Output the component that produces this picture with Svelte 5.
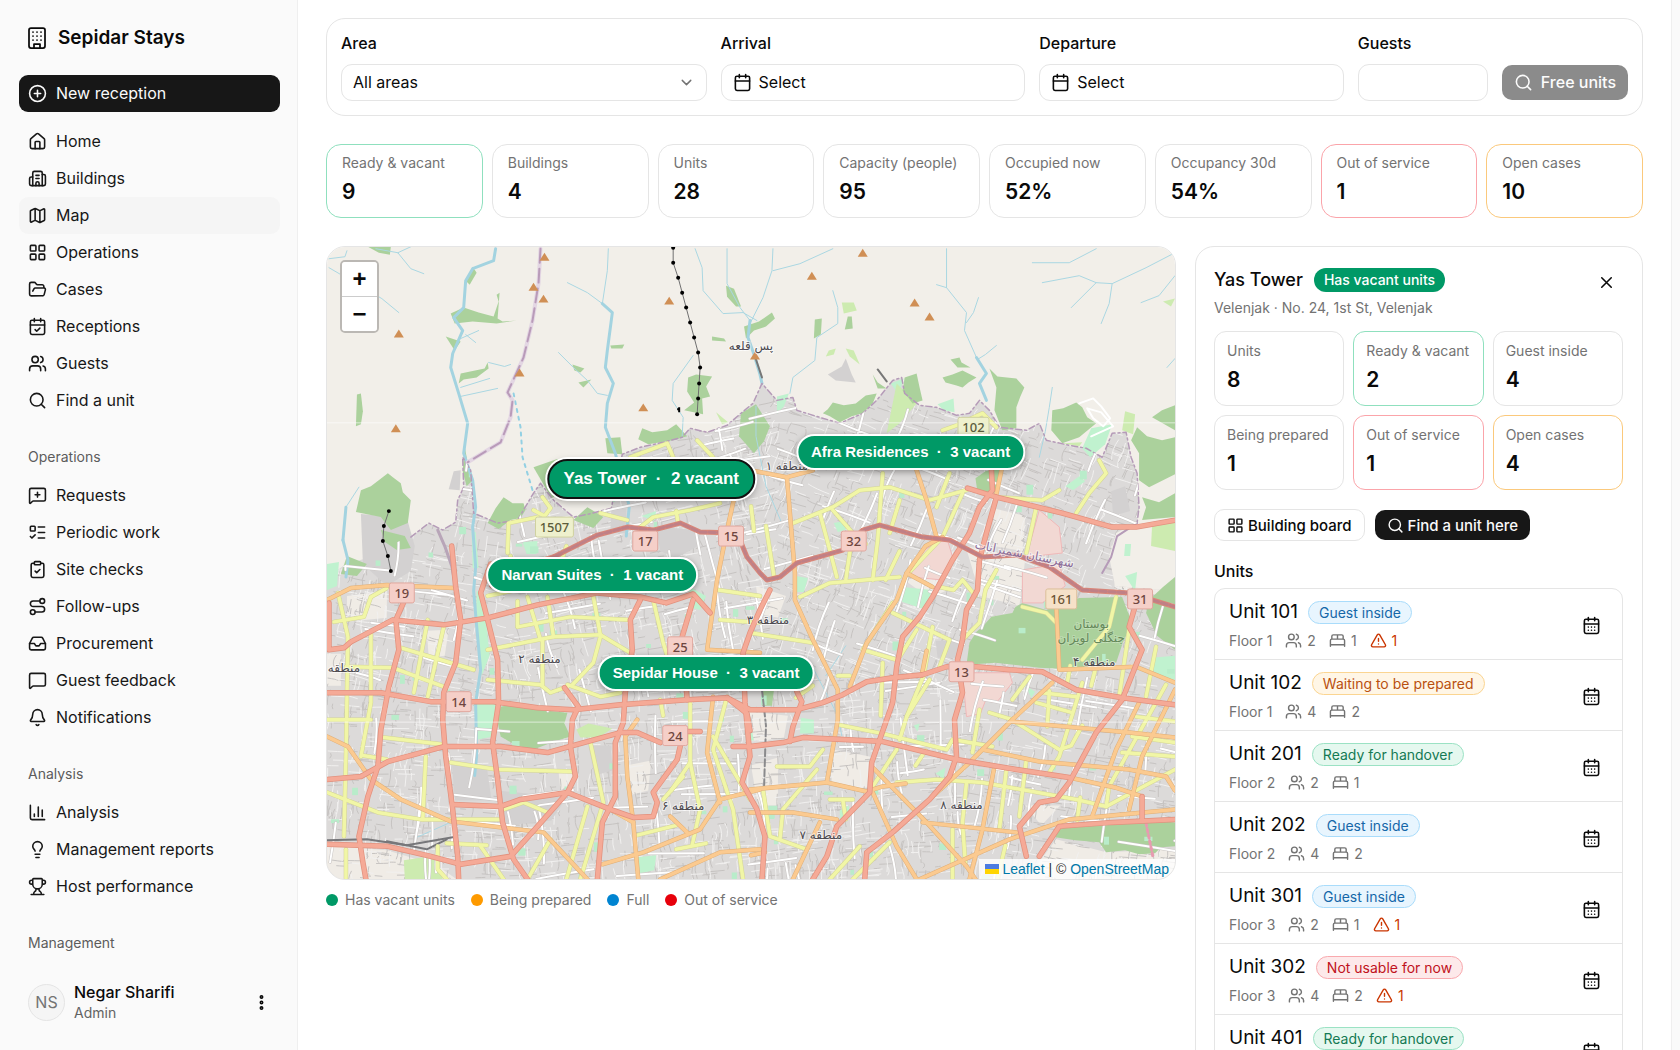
<script lang="ts">
  const icons: Record<string, string> = {
    building: '<rect x="4" y="2" width="16" height="20" rx="2"/><path d="M9 22v-4h6v4M8 6h.01M12 6h.01M16 6h.01M8 10h.01M12 10h.01M16 10h.01M8 14h.01M12 14h.01M16 14h.01"/>',
    plus: '<circle cx="12" cy="12" r="10"/><path d="M8 12h8M12 8v8"/>',
    home: '<path d="M15 21v-8a1 1 0 0 0-1-1h-4a1 1 0 0 0-1 1v8"/><path d="M3 10a2 2 0 0 1 .709-1.528l7-5.999a2 2 0 0 1 2.582 0l7 5.999A2 2 0 0 1 21 10v9a2 2 0 0 1-2 2H5a2 2 0 0 1-2-2z"/>',
    buildings: '<path d="M10 12h4M10 8h4M14 21v-3a2 2 0 0 0-4 0v3"/><path d="M6 10H4a2 2 0 0 0-2 2v7a2 2 0 0 0 2 2h16a2 2 0 0 0 2-2V9a2 2 0 0 0-2-2h-2"/><path d="M6 21V5a2 2 0 0 1 2-2h8a2 2 0 0 1 2 2v16"/>',
    map: '<path d="M14.106 5.553a2 2 0 0 0 1.788 0l3.659-1.83A1 1 0 0 1 21 4.619v12.764a1 1 0 0 1-.553.894l-4.553 2.277a2 2 0 0 1-1.788 0l-4.212-2.106a2 2 0 0 0-1.788 0l-3.659 1.83A1 1 0 0 1 3 19.381V6.618a1 1 0 0 1 .553-.894l4.553-2.277a2 2 0 0 1 1.788 0zM15 5.764v15M9 3.236v15"/>',
    grid: '<rect x="3" y="3" width="7" height="7" rx="1"/><rect x="14" y="3" width="7" height="7" rx="1"/><rect x="14" y="14" width="7" height="7" rx="1"/><rect x="3" y="14" width="7" height="7" rx="1"/>',
    folder: '<path d="m6 14 1.5-2.9A2 2 0 0 1 9.24 10H20a2 2 0 0 1 1.94 2.5l-1.54 6a2 2 0 0 1-1.95 1.5H4a2 2 0 0 1-2-2V5a2 2 0 0 1 2-2h3.9a2 2 0 0 1 1.69.9l.81 1.2a2 2 0 0 0 1.67.9H18a2 2 0 0 1 2 2v2"/>',
    calendarCheck: '<rect x="3" y="4" width="18" height="18" rx="2"/><path d="M8 2v4M16 2v4M3 10h18M9 16l2 2 4-4"/>',
    users: '<path d="M16 21v-2a4 4 0 0 0-4-4H6a4 4 0 0 0-4 4v2M16 3.128a4 4 0 0 1 0 7.744M22 21v-2a4 4 0 0 0-3-3.87"/><circle cx="9" cy="7" r="4"/>',
    search: '<path d="m21 21-4.34-4.34"/><circle cx="11" cy="11" r="8"/>',
    messagePlus: '<path d="M22 17a2 2 0 0 1-2 2H6.828a2 2 0 0 0-1.414.586l-2.202 2.202A.71.71 0 0 1 2 21.286V5a2 2 0 0 1 2-2h16a2 2 0 0 1 2 2zM12 8v6M9 11h6"/>',
    todo: '<path d="M13 5h8M13 12h8M13 19h8M3 17l2 2 4-4"/><rect x="3" y="4" width="6" height="6" rx="1"/>',
    clipboard: '<rect x="8" y="2" width="8" height="4" rx="1"/><path d="M16 4h2a2 2 0 0 1 2 2v14a2 2 0 0 1-2 2H6a2 2 0 0 1-2-2V6a2 2 0 0 1 2-2h2M9 14l2 2 4-4"/>',
    route: '<circle cx="6" cy="19" r="3"/><path d="M9 19h8.5a3.5 3.5 0 0 0 0-7h-11a3.5 3.5 0 0 1 0-7H15"/><circle cx="18" cy="5" r="3"/>',
    inbox: '<path d="M22 12h-6l-2 3h-4l-2-3H2"/><path d="M5.45 5.11 2 12v6a2 2 0 0 0 2 2h16a2 2 0 0 0 2-2v-6l-3.45-6.89A2 2 0 0 0 16.76 4H7.24a2 2 0 0 0-1.79 1.11z"/>',
    message: '<path d="M22 17a2 2 0 0 1-2 2H6.828a2 2 0 0 0-1.414.586l-2.202 2.202A.71.71 0 0 1 2 21.286V5a2 2 0 0 1 2-2h16a2 2 0 0 1 2 2z"/>',
    bell: '<path d="M10.268 21a2 2 0 0 0 3.464 0"/><path d="M3.262 15.326A1 1 0 0 0 4 17h16a1 1 0 0 0 .74-1.673C19.41 13.956 18 12.499 18 8A6 6 0 0 0 6 8c0 4.499-1.411 5.956-2.738 7.326"/>',
    chart: '<path d="M3 3v16a2 2 0 0 0 2 2h16M18 17V9M13 17V5M8 17v-3"/>',
    bulb: '<path d="M15 14c.2-1 .7-1.7 1.5-2.5 1-.9 1.5-2.2 1.5-3.5A6 6 0 0 0 6 8c0 1 .2 2.2 1.5 3.5.7.7 1.3 1.5 1.5 2.5M9 18h6M10 22h4"/>',
    trophy: '<path d="M10 14.66v1.626a2 2 0 0 1-.976 1.696A5 5 0 0 0 7 21.978M14 14.66v1.626a2 2 0 0 0 .976 1.696A5 5 0 0 1 17 21.978M18 9h1.5a1 1 0 0 0 0-5H18M4 22h16M6 9a6 6 0 0 0 12 0V3a1 1 0 0 0-1-1H7a1 1 0 0 0-1 1zM6 9H4.5a1 1 0 0 1 0-5H6"/>',
    dots: '<circle cx="12" cy="5" r="1"/><circle cx="12" cy="12" r="1"/><circle cx="12" cy="19" r="1"/>',
    chevron: '<path d="m6 9 6 6 6-6"/>',
    calendar: '<rect x="3" y="4" width="18" height="18" rx="2"/><path d="M8 2v4M16 2v4M3 10h18"/>',
    calendarDays: '<rect x="3" y="4" width="18" height="18" rx="2"/><path d="M8 2v4M16 2v4M3 10h18M8 14h.01M12 14h.01M16 14h.01M8 18h.01M12 18h.01M16 18h.01"/>',
    bed: '<path d="M2 20v-8a2 2 0 0 1 2-2h16a2 2 0 0 1 2 2v8M4 10V6a2 2 0 0 1 2-2h12a2 2 0 0 1 2 2v4M12 4v6M2 18h20"/>',
    alert: '<path d="m21.73 18-8-14a2 2 0 0 0-3.48 0l-8 14A2 2 0 0 0 4 21h16a2 2 0 0 0 1.73-3M12 9v4M12 17h.01"/>',
    x: '<path d="M18 6 6 18M6 6l12 12"/>'
  };

  const groups = [
    {
      title: '',
      items: [
        { icon: 'home', name: 'Home' },
        { icon: 'buildings', name: 'Buildings' },
        { icon: 'map', name: 'Map' },
        { icon: 'grid', name: 'Operations' },
        { icon: 'folder', name: 'Cases' },
        { icon: 'calendarCheck', name: 'Receptions' },
        { icon: 'users', name: 'Guests' },
        { icon: 'search', name: 'Find a unit' }
      ]
    },
    {
      title: 'Operations',
      items: [
        { icon: 'messagePlus', name: 'Requests' },
        { icon: 'todo', name: 'Periodic work' },
        { icon: 'clipboard', name: 'Site checks' },
        { icon: 'route', name: 'Follow-ups' },
        { icon: 'inbox', name: 'Procurement' },
        { icon: 'message', name: 'Guest feedback' },
        { icon: 'bell', name: 'Notifications' }
      ]
    },
    {
      title: 'Analysis',
      items: [
        { icon: 'chart', name: 'Analysis' },
        { icon: 'bulb', name: 'Management reports' },
        { icon: 'trophy', name: 'Host performance' }
      ]
    },
    { title: 'Management', items: [] }
  ];

  const stats = [
    { label: 'Ready & vacant', value: '9', tone: 'green' },
    { label: 'Buildings', value: '4', tone: '' },
    { label: 'Units', value: '28', tone: '' },
    { label: 'Capacity (people)', value: '95', tone: '' },
    { label: 'Occupied now', value: '52%', tone: '' },
    { label: 'Occupancy 30d', value: '54%', tone: '' },
    { label: 'Out of service', value: '1', tone: 'red' },
    { label: 'Open cases', value: '10', tone: 'amber' }
  ];

  const buildingStats = [
    { label: 'Units', value: '8', tone: '' },
    { label: 'Ready & vacant', value: '2', tone: 'green' },
    { label: 'Guest inside', value: '4', tone: '' },
    { label: 'Being prepared', value: '1', tone: '' },
    { label: 'Out of service', value: '1', tone: 'red' },
    { label: 'Open cases', value: '4', tone: 'amber' }
  ];

  const units = [
    { no: 101, floor: 1, people: 2, beds: 1, alerts: 1, status: 'Guest inside', tone: 'blue' },
    { no: 102, floor: 1, people: 4, beds: 2, alerts: 0, status: 'Waiting to be prepared', tone: 'amber' },
    { no: 201, floor: 2, people: 2, beds: 1, alerts: 0, status: 'Ready for handover', tone: 'green' },
    { no: 202, floor: 2, people: 4, beds: 2, alerts: 0, status: 'Guest inside', tone: 'blue' },
    { no: 301, floor: 3, people: 2, beds: 1, alerts: 1, status: 'Guest inside', tone: 'blue' },
    { no: 302, floor: 3, people: 4, beds: 2, alerts: 1, status: 'Not usable for now', tone: 'red' },
    { no: 401, floor: 4, people: 2, beds: 1, alerts: 0, status: 'Ready for handover', tone: 'green' }
  ];

  const legend = [
    { name: 'Has vacant units', tone: 'green' },
    { name: 'Being prepared', tone: 'amber' },
    { name: 'Full', tone: 'blue' },
    { name: 'Out of service', tone: 'red' }
  ];

  // map drawing, in units of the 850 x 634 canvas
  const W = 850;
  const H = 634;

  const pins = [
    { name: 'Afra Residences', vacant: 3, x: 585, y: 206 },
    { name: 'Narvan Suites', vacant: 1, x: 266, y: 329 },
    { name: 'Sepidar House', vacant: 3, x: 380, y: 427 },
    { name: 'Yas Tower', vacant: 2, x: 325, y: 233 }
  ];
  let selected = $state('Yas Tower');

  const cityEdge = '84,291 102,277 116,284 129,276 131,254 137,241 136,211 144,224 147,267 171,277 191,274 207,247 214,237 227,254 247,271 262,268 285,262 296,208 314,201 337,196 356,191 364,182 381,186 401,179 416,166 427,157 436,137 451,154 467,151 471,164 494,171 514,177 537,167 551,154 567,134 576,131 579,147 594,159 611,161 631,169 644,167 654,154 664,164 674,181 701,184 714,177 721,194 744,199 761,202 777,211 787,187 801,186 806,211 812,227 814,261 812,277';
  const city = `0,330 20,318 40,312 60,300 ${cityEdge} 791,287 784,311 790,340 850,345 850,634 0,634`;

  const pale = [
    '507,504 544,511 541,544 504,537', '731,594 781,607 850,604 850,634 701,634', '0,600 60,605 110,620 130,634 0,634',
    '786,300 815,285 850,278 850,350 790,345', '424,466 462,470 458,492 424,497', '640,300 700,312 694,360 655,350', '20,350 60,345 60,372 20,376',
    '580,335 605,320 620,345 604,352', '668,262 700,270 697,305 668,300', '425,520 452,512 452,560 432,560', '100,385 122,384 118,410 102,412',
    '0,408 14,408 14,440 0,440', '430,340 460,350 452,372 434,368', '300,520 325,515 322,545 302,550', '700,560 735,560 716,580', '232,525 246,528 246,540 234,545'
  ];
  const pink = ['714,264 734,281 737,307 701,311', '697,324 734,318 740,340 717,357 697,357', '637,427 684,427 687,437 671,457 660,455 655,468 641,471', '621,291 627,311 617,334 584,331 596,305 610,298'];
  const grey = ['34,268 80,272 88,300 84,325 60,340 36,318', '127,225 134,224 133,244 122,243', '502,128 516,120 520,112 526,128 530,136 510,134', '330,280 375,285 372,300 350,312 334,305', '285,262 300,262 300,288 284,286', '170,545 240,552 225,575 180,580', '125,515 160,520 165,555 128,555', '262,500 285,500 286,525 268,530', '610,395 635,395 632,412 612,412', '786,245 800,240 805,265 788,270'];
  const forest = [
    '34,244 44,240 61,227 66,231 74,237 76,246 84,254 81,277 64,284 54,271 29,266', '207,221 230,213 245,211 240,245 225,252', '161,277 169,262 177,251 186,257 197,257 199,264 194,272 184,274 172,283', '247,274 261,261 277,271 267,282',
    '279,192 294,191 296,208 281,207', '316,182 326,186 341,184 350,178 361,190 347,194 322,198 312,193', '362,131 370,128 386,130 380,140 384,150 376,152 377,168 358,164 368,156 361,145', '415,167 430,158 444,180 438,195 428,207 413,190',
    '497,167 502,163 507,156 518,159 530,157 540,149 551,147 547,157 537,167 526,170 514,176 504,170', '579,131 591,127 594,141 597,154 587,157 577,144', '617,131 627,128 637,124 651,131 643,136 637,141 631,139 620,136', '625,113 634,111 636,116 645,121 632,121',
    '664,122 672,130 691,132 699,141 695,150 691,161 691,182 677,184 669,164 671,141', '727,164 738,162 751,156 757,161 762,171 771,177 754,191 737,197 726,184', '812,181 822,190 837,194 850,191 850,228 824,241 814,234 814,207 806,194', '827,171 837,164 850,159 850,184',
    '817,251 834,256 850,247 850,271 817,274 821,261', '644,397 651,386 657,381 666,371 687,367 690,361 697,357 721,364 754,352 797,351 807,377 798,396 791,417 757,424 714,422 670,417 641,419', '850,331 838,341 824,354 821,367 832,390 850,404', '734,584 757,577 780,580 821,574 850,577 850,601 836,602 830,608 814,609 800,605 781,607 774,597 750,595 730,592',
    '174,461 188,458 211,464 241,467 238,478 244,491 228,496 207,504 190,500 174,491 171,476', '137,61 152,66 167,70 172,55 170,48 173,46 171,72 176,75 190,74 170,77 146,75 128,77 124,67', '139,34 146,20 150,26 143,38', '132,137 134,127 158,122 161,116 162,122 150,131 137,133',
    '119,90 134,95 128,104', '30,148 34,147 36,165 34,178 29,180', '284,99 298,98 296,102 285,102', '246,118 258,122 254,126 248,124', '252,136 265,133 257,141', '400,39 408,42 415,60 410,60 401,50', '433,75 446,66 449,72 440,80 428,84 420,92 418,80', '489,73 496,72 495,88 488,92',
    '522,70 526,70 527,82 519,83', '138,200 142,222 146,234 140,240 136,225', '41,0 64,0 63,8 52,6', '386,90 398,92 400,95 386,94', '380,2 384,2', '54,284 78,290 84,302 70,304 58,296', '20,310 40,318 30,330 14,328', '660,225 674,222 672,246 652,246 650,232', '436,440 448,444 446,460 436,460', '547,128 552,136 561,142 552,142'
  ];
  const meadow = ['571,137 591,157 574,177 561,187', '516,56 528,56 531,64 518,67', '503,104 510,102 508,108 500,110', '520,102 528,104 534,118 524,110', '800,165 810,168 808,188 797,184', '838,55 850,52 846,60', '390,166 402,176 396,178', '77,615 110,610 116,634 78,634', '250,484 262,478 286,483 272,492 254,492', '827,280 850,275 850,305 826,300', '737,197 757,196 754,200'];
  const park = [
    '147,457 171,457 167,491 151,494', '577,341 606,344 601,364 571,354', '766,182 787,178 780,198 765,211 757,202', '565,137 578,132 574,145 570,144', '451,150 463,147 458,160 451,168', '612,158 628,152 629,166 618,164', '196,296 211,295 210,308 200,308', '475,472 488,474 488,488 474,488', '826,412 850,410 850,434 830,430', '150,345 156,346 160,380 163,410 155,430 149,380',
    '508,277 518,275 520,284 512,286', '145,286 149,286 152,322 146,322', '315,270 330,265 328,275', '514,565 523,560 524,573 514,574', '610,528 620,522 618,533', '310,612 330,610 328,625 314,628', '740,240 754,230 760,235 748,244', '800,330 812,326 810,345', '470,330 482,332 478,346 471,346', '418,475 424,475 428,495 420,495', '362,340 380,350 374,364 366,362', '0,318 12,316 10,340 0,344', '588,480 594,478 592,486', '700,440 710,446 706,452', '800,298 806,298 805,310 799,310'
  ];

  const rivers = [
    '169,2 167,14 146,22 139,34 137,61 127,71 136,84 126,107 124,121 132,147 141,177 137,207 146,234 149,261 146,281 149,321 147,345 150,380 154,424 149,457 150,510 148,530',
    '276,57 286,66 281,104 279,121 287,137 281,157 279,181 289,207 296,235 303,260 300,290', '424,74 422,91 428,108 434,128 436,137', '651,111 661,127 654,137 661,154', '16,294 21,314 19,331', '19,261 16,294'
  ];
  const streams = [
    '282,2 281,24 276,57', '241,36 261,46 276,57', '232,106 247,121 261,134 271,147 281,149', '369,2 376,21 377,44 397,67 417,66 431,74', '401,2 401,37 414,61 424,74', '447,2 446,24 437,51 424,77', '507,2 474,17 447,24',
    '621,2 621,41 641,66 639,84 651,111', '653,51 648,66 641,76', '671,99 660,108 652,113', '507,44 512,61 512,77 491,91 489,114 467,131 464,147', '707,16 744,16 771,2', '717,36 754,29 771,36 787,37 821,21 850,6', '771,36 746,61', '787,37 784,57 776,77', '850,29 834,49 816,56',
    '727,141 724,161 720,185 714,211', '850,112 842,121', '2,21 14,28 55,52 72,66', '49,2 71,6 84,22 97,27', '71,6 84,0', '32,241 19,261', '367,109 347,137 346,154 357,171 356,190', '134,92 152,84', '139,88 149,96', '134,141 163,132', '134,150 171,142', '162,116 178,120 184,118', '430,160 430,190 440,240 455,275', '2,12 18,10 20,4', '90,592 126,576', '486,420 512,470 516,490', '611,38 621,41', '520,400 500,430'
  ];

  const trunk = [
    '2,357 2,404 17,402 24,396 66,374 117,379 161,372 211,359 271,347 314,351 340,357 367,348 384,367', '77,356 69,374 72,404 62,441 54,484 51,521 41,551 32,591 36,617 39,634', '125,300 129,341 134,374 129,417 117,447 116,474 119,511 126,564 131,611 132,634',
    '0,447 54,447 104,456 167,456 211,462 247,464 294,459 361,454 401,452 424,464 471,464 497,457 517,449 541,436 567,432 597,429 621,421 651,421 684,424 717,426 751,444 797,452 850,459', '164,318 154,347 161,374 171,414 172,457 166,497 171,534 176,577 187,614 201,634',
    '0,534 34,531 61,516 117,501 174,501 221,507 261,496 294,487 311,487 334,497', '361,486 374,486', '407,501 424,501 457,497 477,492 557,496 631,514 691,524 744,532', '126,559 174,561 194,554 241,547 284,564 307,572 327,571 331,557 327,547 351,514 354,501', '238,442 252,461 246,474 244,501 249,531 241,547 211,581 184,611 134,619 104,611 61,601 0,599',
    '299,447 297,477 289,497 289,551 276,577 271,634', '227,311 190,322 161,326', '444,344 434,364 424,387 417,407 419,457 424,511 416,537 431,564 439,591 436,634', '314,354 304,374 306,404 299,447', '367,354 356,391 361,454', '642,242 671,251 737,267 787,281 811,281 850,274', '666,224 667,244 654,261 644,287 627,314 607,351 594,371 577,391 571,421 567,457 554,494 546,517 544,547 511,581 501,611 487,634',
    '671,251 661,287 654,314 652,344 641,364 637,394 632,414 637,447 629,474 631,511 624,531 604,554 567,587 541,607 539,634', '811,357 804,381 817,404 797,454 771,487 744,537 731,554 714,557 694,581 701,611', '471,446 476,456 467,481 464,496', '817,551 817,574', '850,574 787,577 734,581 714,611', '401,452 421,468 424,485'
  ];
  const ring = '165,340 190,325 227,311 271,289 301,281 327,284 354,277 374,286 411,287 421,311 434,327 441,334 454,331 471,317 517,304 537,284 554,279 597,291 624,294 657,311 691,309 724,321 757,344 804,347 850,361';
  const primary = [
    '414,225 407,257 401,284 391,334 381,404 434,407', '414,222 424,224 461,231 487,224', '461,231 464,267 469,327 469,354 487,394 512,444 512,474 501,537', '591,224 601,254 611,291', '676,224 671,248', '607,341 581,327 571,354 541,397 524,441', '424,544 501,537 541,546 557,541 580,538', '547,547 571,601 591,634', '546,521 601,577 641,621 650,634',
    '727,437 687,474 644,517 604,554', '687,476 804,487 850,492', '657,504 714,516 804,524 841,531 850,545', '669,521 657,584 644,634', '597,577 691,587', '594,634 684,594 744,574 850,564', '731,361 734,424 811,421 850,437', '850,444 817,511 804,564', '814,457 791,504 767,571', '0,491 21,501 44,534 74,554 124,576 217,587 261,634',
    '311,474 299,491 301,531 307,577 312,634', '276,619 317,607 374,584 394,554 434,544', '334,634 394,607 434,604', '387,451 381,507 394,557', '344,571 361,587', '0,354 24,342 60,339 127,342', '424,567 467,567 511,574', '494,577 467,634', '744,532 790,542 817,551', '581,327 600,300 617,291', '284,564 307,577', '425,610 439,607', '601,405 596,430'
  ];
  const secondary = [
    '371,194 387,211', '304,211 341,197 347,211', '314,281 327,271 364,264 394,257', '274,267 301,274', '207,264 218,270 224,262 216,251', '181,307 182,277 211,271', '467,277 507,261 534,244 564,241 604,254 641,244', '507,264 527,287 540,298', '557,227 552,294 547,334', '574,254 564,287', '624,227 611,261', '637,247 617,291 580,330', '671,251 717,254 734,244', '774,214 781,227 764,247 751,267', '711,261 701,307', '617,184 631,179 657,167 671,181',
    '494,267 504,304 511,331', '11,347 21,391 19,511 17,591', '44,387 44,457 34,511', '0,474 44,474', '19,421 66,422 117,441', '71,401 147,424', '101,374 87,447', '117,381 101,451', '7,376 37,371 44,351 60,342', '191,381 244,371 301,374', '161,404 227,391 274,389 304,407', '161,434 214,439 224,447 241,441', '216,394 216,439', '241,439 274,451 294,447', '274,391 267,417 246,439', '221,351 227,391', '267,351 274,389', '201,351 214,394', '191,355 191,381',
    '124,517 171,524 247,526', '57,492 117,499', '99,511 96,574', '0,547 51,567 94,574 174,574', '264,497 277,557 254,634', '261,561 240,634', '177,564 197,557 221,567', '154,601 177,634', '111,601 111,624 120,634', '120,598 160,600', '224,594 201,634', '19,604 19,634', '364,457 364,517 374,564 366,600', '401,451 387,504 407,564 417,634', '387,491 424,554', '394,374 434,377', '392,344 434,350', '334,454 337,470', '327,354 337,397 344,420', '357,531 337,554', '364,517 345,545',
    '161,350 200,342', '36,510 60,514', '474,351 504,337 574,331', '424,387 487,397', '567,367 624,394 614,421', '607,381 598,430 581,471', '567,357 537,404 571,414', '591,384 574,411', '557,417 555,470', '604,434 581,471 574,494', '512,479 557,488 621,504 627,494 667,501', '571,537 611,534 657,537 751,554 781,561 850,524', '571,504 547,541', '451,521 484,521 497,504', '491,524 457,564 454,594', '437,544 444,591 481,604', '504,554 527,554', '517,554 520,574', '641,537 637,577 640,620', '681,524 674,584', '701,514 694,571', '627,584 627,634',
    '757,437 734,511 724,527', '717,447 751,451', '711,457 747,467', '724,445 722,481', '691,477 734,504 746,500 757,480', '664,467 687,474', '704,431 687,454', '804,384 794,451', '791,351 784,381 757,414', '697,361 721,367 731,377', '831,401 821,451', '811,471 850,476', '807,491 850,497', '797,507 850,511', '841,439 784,541 781,561', '654,464 647,507', '614,341 628,344 637,334 650,350', '671,324 660,344 654,377 637,394', '534,601 504,634', '564,597 527,634', '755,552 752,575', '680,600 672,634', '771,420 766,440', '745,420 742,437', '487,440 470,452', '512,430 524,430', '590,520 600,505', '310,590 350,580', '350,604 380,598', '440,280 448,330', '525,300 520,334', '574,305 560,334', '184,310 182,345', '240,300 236,312', '350,265 352,277', '425,260 428,285'
  ];

  // deterministic scatter of side streets, turned to the grid of their district
  let seed = 7;
  function rnd() {
    seed = (seed * 16807) % 2147483647;
    return seed / 2147483647;
  }

  function turn(x: number, y: number) {
    if (x > 640 && y > 430) return 0.16;
    if (x > 440 && y < 430) return 0.35;
    if (x < 180) return y < 450 ? 0.2 : 0.06;
    return y < 430 ? -0.22 : -0.08;
  }

  function scatter(count: number, min: number, max: number) {
    let d = '';
    for (let i = 0; i < count; i++) {
      const x = rnd() * W;
      const y = 150 + rnd() * (H - 150);
      const a = turn(x, y) + (rnd() > 0.5 ? Math.PI / 2 : 0) + (rnd() - 0.5) * 0.2;
      const l = min + rnd() * (max - min);
      const bend = (rnd() - 0.5) * 8;
      d += `M${x.toFixed(1)} ${y.toFixed(1)}q${(Math.cos(a) * l / 2 + bend).toFixed(1)} ${(Math.sin(a) * l / 2).toFixed(1)} ${(Math.cos(a) * l).toFixed(1)} ${(Math.sin(a) * l).toFixed(1)}`;
    }
    return d;
  }

  const alleys = scatter(3600, 5, 18);
  const whiteAlleys = scatter(2200, 6, 24);
  const streets = scatter(190, 22, 60);
  const greens = Array.from({ length: 80 }, () => ({ x: rnd() * W, y: 200 + rnd() * 434, w: 3 + rnd() * 6, h: 3 + rnd() * 7 }));

  const peaks = [[218, 11], [207, 41], [217, 53], [343, 55], [72, 88], [193, 127], [317, 162], [69, 183], [429, 110], [537, 7], [486, 30], [589, 57], [604, 71]];
  const cable = [[347, 1], [347, 16], [352, 31], [356, 46], [360, 61], [364, 76], [368, 91], [372, 106], [374, 121], [373, 137], [372, 152], [371, 168]];
  const cable2 = [[62, 265], [57, 280], [56, 295], [61, 310], [64, 325]];

  const shields = [
    { t: '1507', x: 228, y: 281, w: 38, kind: 'yellow' },
    { t: '102', x: 648, y: 181, w: 31, kind: 'yellow' },
    { t: '161', x: 736, y: 353, w: 31, kind: 'orange' },
    { t: '17', x: 319, y: 295, w: 25, kind: 'pink' },
    { t: '15', x: 405, y: 290, w: 25, kind: 'pink' },
    { t: '32', x: 528, y: 295, w: 25, kind: 'pink' },
    { t: '19', x: 75, y: 347, w: 25, kind: 'pink' },
    { t: '25', x: 354, y: 401, w: 25, kind: 'pink' },
    { t: '14', x: 132, y: 456, w: 25, kind: 'pink' },
    { t: '24', x: 349, y: 490, w: 25, kind: 'pink' },
    { t: '31', x: 815, y: 353, w: 25, kind: 'pink' },
    { t: '13', x: 636, y: 426, w: 25, kind: 'pink' }
  ];

  const places = [
    { t: 'پس قلعه', x: 425, y: 104 },
    { t: 'منطقه ۱', x: 461, y: 224 },
    { t: 'منطقه ۲', x: 213, y: 417 },
    { t: 'منطقه ۳', x: 442, y: 378 },
    { t: 'منطقه ۴', x: 769, y: 420 },
    { t: 'منطقه', x: 17, y: 426 },
    { t: 'منطقه ۶', x: 357, y: 565 },
    { t: 'منطقه ۷', x: 495, y: 594 },
    { t: 'منطقه ۸', x: 636, y: 564 }
  ];
</script>

{#snippet icon(name: string, size: number, width = 2)}
  <svg class="icon" width={size} height={size} viewBox="0 0 24 24" fill="none" stroke="currentColor" stroke-width={width} stroke-linecap="round" stroke-linejoin="round" aria-hidden="true">
    {@html icons[name]}
  </svg>
{/snippet}

{#snippet stat(item: { label: string; value: string; tone: string })}
  <div class="stat {item.tone}">
    <span>{item.label}</span>
    <strong>{item.value}</strong>
  </div>
{/snippet}

<div class="app">
  <aside>
    <header>
      {@render icon('building', 24, 1.75)}
      <h1>Sepidar Stays</h1>
    </header>
    <button class="new">{@render icon('plus', 19)} New reception</button>
    <nav>
      {#each groups as group}
        {#if group.title}<h2>{group.title}</h2>{/if}
        {#if group.items.length}
          <ul>
            {#each group.items as item}
              <li><a href="#top" class:active={item.name == 'Map'}>{@render icon(item.icon, 19)} {item.name}</a></li>
            {/each}
          </ul>
        {/if}
      {/each}
    </nav>
    <footer>
      <span class="avatar">NS</span>
      <div class="who">
        <b>Negar Sharifi</b>
        <span>Admin</span>
      </div>
      <button class="plain" aria-label="Account menu">{@render icon('dots', 19, 3)}</button>
    </footer>
  </aside>

  <main>
    <form class="filters" onsubmit={(e) => e.preventDefault()}>
      <div class="field">
        <label for="area">Area</label>
        <div class="select">
          <select id="area"><option>All areas</option></select>
          {@render icon('chevron', 17)}
        </div>
      </div>
      <div class="field">
        <label for="arrival">Arrival</label>
        <button type="button" id="arrival" class="date">{@render icon('calendar', 19)} Select</button>
      </div>
      <div class="field">
        <label for="departure">Departure</label>
        <button type="button" id="departure" class="date">{@render icon('calendar', 19)} Select</button>
      </div>
      <div class="field">
        <label for="guests">Guests</label>
        <input id="guests" type="text" inputmode="numeric" />
      </div>
      <button class="free" disabled>{@render icon('search', 19)} Free units</button>
    </form>

    <section class="stats">
      {#each stats as item}
        {@render stat(item)}
      {/each}
    </section>

    <div class="columns">
      <section class="map-side">
        <div class="map">
          <svg class="canvas" viewBox="0 0 {W} {H}" preserveAspectRatio="xMidYMid slice" aria-hidden="true">
            <defs>
              <clipPath id="city"><polygon points={city} /></clipPath>
            </defs>
            <rect width={W} height={H} fill="#f2efe9" />
            <polygon points={city} fill="#dcdad9" />
            <g clip-path="url(#city)">
              {#each pale as p}<polygon points={p} fill="#f0ece6" />{/each}
              <path d={alleys} fill="none" stroke="#c6c3c1" stroke-width="1" />
              <path d={whiteAlleys} fill="none" stroke="#f1f0ef" stroke-width="1" />
            </g>
            {#each grey as p}<polygon points={p} fill="#d3d1d1" />{/each}
            {#each park as p}<polygon points={p} fill="#c0f2cf" />{/each}
            {#each meadow as p}<polygon points={p} fill="#cdebb0" />{/each}
            {#each forest as p}<polygon points={p} fill="#abd19c" />{/each}
            {#each pink as p}<polygon points={p} fill="#f2d8d3" stroke="#f0b8b8" stroke-width="1" />{/each}
            <g clip-path="url(#city)">
              {#each greens as g}<rect x={g.x} y={g.y} width={g.w} height={g.h} fill="#b9ecca" />{/each}
            </g>

            <g fill="none" stroke-linejoin="round" stroke-linecap="round">
              {#each streams as p}<polyline points={p} stroke="#aad7e2" stroke-width="1" />{/each}
              {#each rivers as p}<polyline points={p} stroke="#a3d3e0" stroke-width="3" />{/each}
              <polyline points="187,147 194,181 196,211 206,244" stroke="#93d0e3" stroke-width="2" stroke-dasharray="3 5" />
              <polyline points={cityEdge} stroke="#b59bb8" stroke-width="1.5" stroke-dasharray="6 3 2 3" />
              <polyline points="214,2 212,37 206,74 197,111 181,146 186,154 184,171 174,196 141,216" stroke="#e3d6e3" stroke-width="4" />
              <polyline points="214,2 212,37 206,74 197,111 181,146 186,154 184,171 174,196 141,216" stroke="#b99bb9" stroke-width="2" stroke-dasharray="14 6" />
              <polyline points="812,277 792,290 786,311 777,327" stroke="#b59bb8" stroke-width="2" />
              <polyline points="111,284 118,300 125,320 129,341" stroke="#b8a5b8" stroke-width="3" />
              <g clip-path="url(#city)">
                <path d={streets} stroke="#c9c5c3" stroke-width="3" />
                <path d={streets} stroke="#fff" stroke-width="2" />
              </g>
              <polyline points="754,157 768,152 776,160 785,172 778,180 768,172 762,162 776,166 788,180 766,190" stroke="#fff" stroke-width="2" />
              <polyline points="0,595 40,594 80,600 126,592" stroke="#77777a" stroke-width="2" />
              <polyline points="60,596 100,604 120,594" stroke="#77777a" stroke-width="2" />
              <polyline points="436,444 440,480 438,545" stroke="#8a8a8c" stroke-width="2" stroke-dasharray="7 3" />
              <polyline points="821,578 828,612" stroke="#e79bb0" stroke-width="3" stroke-dasharray="3 3" />

              {#each secondary as p}<polyline points={p} stroke="#d3d498" stroke-width="4.5" />{/each}
              {#each secondary as p}<polyline points={p} stroke="#f1f6a6" stroke-width="3.5" />{/each}
              {#each primary as p}<polyline points={p} stroke="#dfae77" stroke-width="4.5" />{/each}
              {#each primary as p}<polyline points={p} stroke="#fbca90" stroke-width="3.5" />{/each}
              {#each trunk as p}<polyline points={p} stroke="#e2917e" stroke-width="5.5" />{/each}
              {#each trunk as p}<polyline points={p} stroke="#f5aa97" stroke-width="4" />{/each}
              <polyline points={ring} stroke="#d98678" stroke-width="5" />
              <polyline points={ring} stroke="#c08086" stroke-width="3" stroke-dasharray="6 3" />
              <polyline points={cable.map((c) => c.join()).join(' ')} stroke="#6f6f6f" stroke-width="1" />
              <polyline points={cable2.map((c) => c.join()).join(' ')} stroke="#6f6f6f" stroke-width="1" />
              <path d="M552 123l9 12M430 113l6 18" stroke="#777" stroke-width="2" />
            </g>
            {#each [...cable, ...cable2] as [x, y]}<circle cx={x} cy={y} r="2" />{/each}
            <path d="M353 161v5M351 163h3" stroke="#000" stroke-width="2" />
            {#each peaks as [x, y]}<path d="M{x} {y - 5}l5 8h-10z" fill="#d08f55" />{/each}
            <path d="M0 176.5h850M0 476.5h850" stroke="#fff" stroke-opacity="0.6" />

            {#each shields as s}
              <g class="shield {s.kind}">
                <rect x={s.x - s.w / 2} y={s.y - 10} width={s.w} height="20" rx="2" />
                <text x={s.x} y={s.y + 5}>{s.t}</text>
              </g>
            {/each}
            {#each places as p}<text class="place" x={p.x} y={p.y}>{p.t}</text>{/each}
            <text class="place wood" x="766" y="382">بوستان</text>
            <text class="place wood" x="766" y="396">جنگلی لویزان</text>
            <text class="place county" x="699" y="312" transform="rotate(11 699 308)">شهرستان شمیرانات</text>
          </svg>

          <div class="zoom">
            <button aria-label="Zoom in">+</button>
            <button aria-label="Zoom out">−</button>
          </div>

          {#each pins as pin}
            <button
              class="pin"
              class:selected={pin.name == selected}
              style="left: {(pin.x / W) * 100}%; top: {(pin.y / H) * 100}%"
              onclick={() => (selected = pin.name)}
            >{pin.name}&nbsp; · &nbsp;{pin.vacant} vacant</button>
          {/each}

          <p class="credit">
            <svg width="14" height="10" viewBox="0 0 14 10" aria-hidden="true"><path fill="#4c7be1" d="M0 0h14v5H0z" /><path fill="#ffd500" d="M0 5h14v5H0z" /></svg>
            <a href="#top">Leaflet</a> | © <a href="#top">OpenStreetMap</a>
          </p>
        </div>
        <ul class="legend">
          {#each legend as item}
            <li><i class={item.tone}></i>{item.name}</li>
          {/each}
        </ul>
      </section>

      <section class="panel">
        <div class="panel-head">
          <div>
            <h2>Yas Tower <span class="tag">Has vacant units</span></h2>
            <p>Velenjak · No. 24, 1st St, Velenjak</p>
          </div>
          <button class="plain" aria-label="Close">{@render icon('x', 19)}</button>
        </div>
        <div class="panel-stats">
          {#each buildingStats as item}
            {@render stat(item)}
          {/each}
        </div>
        <div class="actions">
          <button>{@render icon('grid', 17)} Building board</button>
          <button class="dark">{@render icon('search', 17)} Find a unit here</button>
        </div>
        <h3>Units</h3>
        <ul class="units">
          {#each units as unit}
            <li>
              <div>
                <h4>Unit {unit.no} <span class="status {unit.tone}">{unit.status}</span></h4>
                <p>
                  <span>Floor {unit.floor}</span>
                  <span>{@render icon('users', 17)} {unit.people}</span>
                  <span>{@render icon('bed', 17)} {unit.beds}</span>
                  {#if unit.alerts}<span class="warn">{@render icon('alert', 17)} {unit.alerts}</span>{/if}
                </p>
              </div>
              <button class="plain" aria-label="Calendar of unit {unit.no}">{@render icon('calendarDays', 19)}</button>
            </li>
          {/each}
        </ul>
      </section>
    </div>
  </main>
</div>

<style>
  :global(body) {
    margin: 0;
    background: #fafafa;
  }

  .app {
    display: flex;
    height: 100vh;
    overflow: hidden;
    font-family: Inter, "Noto Sans", sans-serif;
    font-size: 16px;
    line-height: 21px;
    color: #0a0a0a;
  }

  .app :is(button, input, select) {
    box-sizing: border-box;
    margin: 0;
    font: inherit;
    color: inherit;
    cursor: pointer;
  }

  h1, h2, h3, h4, p, ul {
    margin: 0;
    padding: 0;
    list-style: none;
  }

  .icon {
    flex: none;
    display: block;
  }

  .plain {
    display: flex;
    padding: 9px;
    border: none;
    background: none;
  }

  /* sidebar */
  aside {
    box-sizing: border-box;
    flex: none;
    width: 297px;
    display: flex; flex-direction: column;
  }

  header {
    display: flex; align-items: center;
    gap: 9px;
    height: 75px;
    padding-left: 25px;
  }

  h1 {
    font-size: 19px;
    font-weight: 600;
  }

  .new {
    display: flex; align-items: center;
    flex: none;
    gap: 9px;
    height: 37px;
    margin: 0 17px 0 19px !important;
    padding: 0 9px;
    border: none;
    border-radius: 9px;
    background: #171717;
    color: #fafafa !important;
  }

  nav {
    flex: 1;
    min-height: 0;
    overflow: hidden;
    padding: 11px 17px 0 19px;
  }

  nav h2 {
    margin: 19px 0 2px;
    padding-left: 9px;
    font-size: 14px;
    font-weight: 400;
    line-height: 37px;
    color: #5c5c5c;
  }

  nav a {
    display: flex; align-items: center;
    gap: 9px;
    height: 37px;
    padding: 0 9px;
    border-radius: 9px;
    color: #171717;
    text-decoration: none;
  }

  nav .active {
    background: #f5f5f5;
  }

  footer {
    display: flex; align-items: center;
    gap: 9px;
    padding: 28px 17px 28px 28px;
  }

  .avatar {
    box-sizing: border-box;
    width: 37px;
    height: 37px;
    border: 1px solid #e5e5e5;
    border-radius: 50%;
    background: #f5f5f5;
    line-height: 35px;
    text-align: center;
    color: #737373;
  }

  .who {
    flex: 1;
    display: flex; flex-direction: column;
  }

  .who b {
    font-weight: 500;
  }

  .who span {
    font-size: 14px;
    line-height: 19px;
    color: #636363;
  }

  /* content */
  main {
    flex: 1;
    min-width: 0;
    margin-right: 8px;
    padding: 18px 28px 0;
    overflow: hidden;
    border: solid #efefef;
    border-width: 0 1px;
    background: #fff;
  }

  .filters {
    display: grid;
    grid-template-columns: 6fr 5fr 5fr 130px auto;
    align-items: end;
    gap: 14px;
    padding: 14px;
    border: 1px solid #e5e5e5;
    border-radius: 19px;
  }

  .field {
    display: flex; flex-direction: column;
    gap: 10px;
    min-width: 0;
  }

  label {
    font-weight: 500;
  }

  .select {
    position: relative;
  }

  .select .icon {
    position: absolute;
    right: 12px; top: 10px;
    color: #737373;
    pointer-events: none;
  }

  select, input, .date {
    width: 100%;
    height: 37px;
    padding: 0 11px;
    border: 1px solid #e5e5e5;
    border-radius: 11px;
    background: #fff;
    appearance: none;
  }

  .date {
    display: flex; align-items: center;
    gap: 7px;
  }

  .free {
    display: flex; align-items: center;
    gap: 8px;
    height: 35px;
    margin-bottom: 1px !important;
    padding: 0 12px;
    border: none;
    border-radius: 10px;
    background: #8b8b8b;
    color: #fcfcfc !important;
    font-weight: 500 !important;
  }

  .stats {
    display: grid;
    grid-template-columns: repeat(8, 1fr);
    gap: 9px;
    margin-top: 28px;
  }

  .stat {
    display: flex; flex-direction: column;
    gap: 5px;
    padding: 7px 15px 11px;
    border: 1px solid #e5e5e5;
    border-radius: 15px;
  }

  .stat span {
    font-size: 14px;
    white-space: nowrap;
    color: #737373;
  }

  .stat strong {
    font-size: 21px;
    font-weight: 600;
    line-height: 28px;
  }

  .stat.green { border-color: #8fe0be; }
  .stat.red { border-color: #fba4aa; }
  .stat.amber { border-color: #fbc97c; }

  .columns {
    display: grid;
    grid-template-columns: 1fr 448px;
    align-items: start;
    gap: 19px;
    margin-top: 28px;
  }

  .map {
    position: relative;
    box-sizing: border-box;
    aspect-ratio: 850 / 634;
    overflow: hidden;
    border: 1px solid #e5e5e5;
    border-radius: 19px;
  }

  .canvas {
    display: block;
    width: 100%;
    height: 100%;
  }

  .place {
    font: 12px "DejaVu Sans", sans-serif;
    text-anchor: middle;
    direction: rtl;
    fill: #4d4a50;
    stroke: #fff;
    stroke-opacity: 0.6;
    stroke-width: 2px;
    paint-order: stroke;
  }

  .place.wood { fill: #65885a; stroke-opacity: 0.2; }
  .place.county { fill: #8b6b96; }

  .shield text {
    font: 500 13px "Noto Sans", sans-serif;
    text-anchor: middle;
  }

  .shield.pink rect { fill: #f5cfc8; stroke: #e0a79e; }
  .shield.pink text { fill: #6e4640; }
  .shield.yellow rect { fill: #eef0cd; stroke: #cfd1a0; }
  .shield.yellow text { fill: #5c5d3c; }
  .shield.orange rect { fill: #f6e1c8; stroke: #dcbf9a; }
  .shield.orange text { fill: #6b5435; }

  .zoom {
    position: absolute;
    left: 13px; top: 13px;
    border: 2px solid #bbb8b4;
    border-radius: 5px;
    overflow: hidden;
  }

  .zoom button {
    display: block;
    width: 35px;
    height: 34px;
    padding: 0;
    border: none;
    background: #fff;
    font: bold 24px "Liberation Sans", sans-serif;
  }

  .zoom button + button {
    height: 35px;
    border-top: 1px solid #ccc;
  }

  .pin {
    position: absolute;
    transform: translate(-50%, -50%);
    padding: 5px 13px;
    border: 2px solid #fff;
    border-radius: 19px;
    background: #009966;
    box-shadow: 0 2px 6px rgb(0 0 0 / 35%);
    color: #fff !important;
    font: bold 15px/22px "Liberation Sans", sans-serif !important;
    white-space: nowrap;
  }

  .pin.selected {
    padding: 7px 14px;
    border-color: #111;
    border-radius: 21px;
    box-shadow: 0 0 0 2px #fff, 0 3px 8px rgb(0 0 0 / 35%);
    font-size: 17px !important;
  }

  .credit {
    position: absolute;
    right: 0; bottom: 0;
    padding: 0 6px;
    background: rgb(255 255 255 / 80%);
    font: 14px/20px "Liberation Sans", sans-serif;
    color: #333;
  }

  .credit a {
    color: #0078a8;
    text-decoration: none;
  }

  .legend {
    display: flex;
    gap: 16px;
    margin-top: 9px;
    font-size: 14px;
    color: #737373;
  }

  .legend li {
    display: flex; align-items: center;
    gap: 7px;
  }

  .legend i {
    width: 12px;
    height: 12px;
    border-radius: 50%;
  }

  .legend .green { background: #009966; }
  .legend .amber { background: #fe9a00; }
  .legend .blue { background: #0084d1; }
  .legend .red { background: #e7000b; }

  /* building panel */
  .panel {
    padding: 20px 19px 28px 18px;
    border: 1px solid #e5e5e5;
    border-radius: 19px;
  }

  .panel-head {
    display: flex; justify-content: space-between; align-items: start;
  }

  .panel-head h2 {
    display: flex; align-items: center;
    gap: 11px;
    font-size: 18px;
    font-weight: 500;
    line-height: 26px;
  }

  .panel-head p {
    margin-top: 4px;
    font-size: 14px;
    color: #737373;
  }

  .panel-head .plain {
    margin: -3px -2px 0 0;
  }

  .tag, .status {
    padding: 0 10px;
    border-radius: 12px;
    font-size: 14px;
    font-weight: 500;
    line-height: 24px;
  }

  .tag {
    background: #009966;
    color: #fff;
  }

  .panel-stats {
    display: grid;
    grid-template-columns: repeat(3, 1fr);
    gap: 9px;
    margin-top: 13px;
  }

  .panel-stats .stat {
    padding: 8px 12px 11px;
    border-radius: 12px;
  }

  .actions {
    display: flex; align-items: center;
    gap: 10px;
    margin-top: 19px;
  }

  .actions button {
    display: flex; align-items: center;
    gap: 4px;
    height: 32px;
    padding: 0 12px;
    border: 1px solid #e5e5e5;
    border-radius: 10px;
    background: #fff;
    font-size: 15px;
    font-weight: 500;
  }

  .actions .dark {
    height: 30px;
    border: none;
    background: #171717;
    color: #fafafa;
  }

  h3 {
    margin-top: 20px;
    font-size: 16px;
    font-weight: 500;
  }

  .units {
    margin-top: 6px;
    border: 1px solid #e5e5e5;
    border-radius: 11px;
  }

  .units li {
    display: flex; justify-content: space-between; align-items: center;
    padding: 10px 12px 8px 14px;
  }

  .units li + li {
    border-top: 1px solid #e5e5e5;
  }

  h4 {
    display: flex; align-items: center;
    gap: 10px;
    font-size: 19px;
    font-weight: 400;
    line-height: 26px;
  }

  .status {
    border: 1px solid;
    font-weight: 400;
    line-height: 21px;
  }

  .status.blue { background: #e8f5fe; border-color: #a9dcfb; color: #1567a8; }
  .status.amber { background: #fff6e6; border-color: #fbd591; color: #b9500f; }
  .status.green { background: #e5f8ef; border-color: #9be2c4; color: #147a54; }
  .status.red { background: #fde9ea; border-color: #f9a9ae; color: #c01220; }

  .units p {
    display: flex;
    gap: 13px;
    margin-top: 5px;
    font-size: 14px;
    color: #737373;
  }

  .units p span {
    display: flex; align-items: center;
    gap: 5px;
  }

  .units .warn {
    color: #ca3500;
  }
</style>
